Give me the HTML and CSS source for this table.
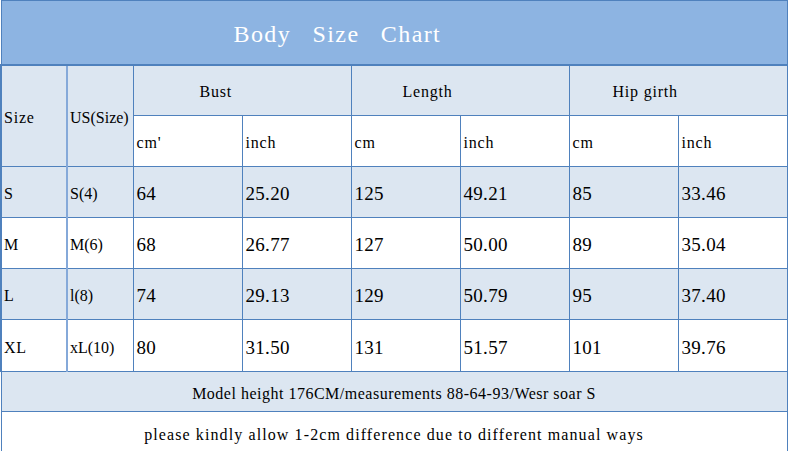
FILE: index.html
```html
<!DOCTYPE html>
<html lang="en">
<head>
<meta charset="utf-8">
<title>Body Size Chart</title>
<link rel="stylesheet" href="styles.css">
</head>
<body>
<table class="chart">
  <colgroup>
    <col class="col-size">
    <col class="col-us">
    <col class="col-val"><col class="col-val">
    <col class="col-val"><col class="col-val">
    <col class="col-val"><col class="col-val">
  </colgroup>
  <tr class="row-title">
    <th colspan="8" class="title"><span>Body</span> <span>Size</span> <span>Chart</span></th>
  </tr>
  <tr class="row-head">
    <th rowspan="2" class="lbl shade first">Size</th>
    <th rowspan="2" class="lbl shade second">US(Size)</th>
    <th colspan="2" class="lbl shade grp grp-bust">Bust</th>
    <th colspan="2" class="lbl shade grp grp-len">Length</th>
    <th colspan="2" class="lbl shade grp grp-hip">Hip girth</th>
  </tr>
  <tr class="row-sub">
    <td class="lbl">cm'</td><td class="lbl">inch</td>
    <td class="lbl">cm</td><td class="lbl">inch</td>
    <td class="lbl">cm</td><td class="lbl">inch</td>
  </tr>
  <tr class="row-data shade">
    <td class="lbl first">S</td><td class="lbl second">S(4)</td>
    <td class="num">64</td><td class="num">25.20</td>
    <td class="num">125</td><td class="num">49.21</td>
    <td class="num">85</td><td class="num">33.46</td>
  </tr>
  <tr class="row-data">
    <td class="lbl first">M</td><td class="lbl second">M(6)</td>
    <td class="num">68</td><td class="num">26.77</td>
    <td class="num">127</td><td class="num">50.00</td>
    <td class="num">89</td><td class="num">35.04</td>
  </tr>
  <tr class="row-data shade">
    <td class="lbl first">L</td><td class="lbl second">l(8)</td>
    <td class="num">74</td><td class="num">29.13</td>
    <td class="num">129</td><td class="num">50.79</td>
    <td class="num">95</td><td class="num">37.40</td>
  </tr>
  <tr class="row-data row-xl">
    <td class="lbl first">XL</td><td class="lbl second">xL(10)</td>
    <td class="num">80</td><td class="num">31.50</td>
    <td class="num">131</td><td class="num">51.57</td>
    <td class="num">101</td><td class="num">39.76</td>
  </tr>
  <tr class="row-note shade">
    <td colspan="8" class="lbl note note-model">Model height 176CM/measurements 88-64-93/Wesr soar S</td>
  </tr>
  <tr class="row-note row-last">
    <td colspan="8" class="lbl note note-allow">please kindly allow 1-2cm difference due to different manual ways</td>
  </tr>
</table>
</body>
</html>
```

FILE: styles.css
```css
html, body {
  margin: 0;
  padding: 0;
  background: #ffffff;
  overflow: hidden;
}

.chart {
  border-collapse: collapse;
  table-layout: fixed;
  width: 786px;
  color: #000000;
}

.col-size { width: 66px; }
.col-us { width: 66px; }
.col-val { width: 109px; }

.chart th,
.chart td {
  border: 1px solid #4f81bd;
  padding: 4px 0 0 3px;
  text-align: left;
  vertical-align: middle;
  font-weight: normal;
  white-space: nowrap;
  overflow: hidden;
}

.row-title { height: 64px; }
.row-head, .row-sub, .row-data { height: 51px; }
.row-xl { height: 52px; }
.row-note { height: 40px; }

.chart .title {
  background: #8db4e2;
  color: #ffffff;
  font-family: "Liberation Serif", "Times New Roman", serif;
  font-size: 24px;
  letter-spacing: 1.4px;
  word-spacing: 14px;
  padding: 5px 0 0 232px;
  border-bottom-width: 2px;
}

.shade,
.shade td { background: #dce6f1; }

.lbl {
  font-family: "Liberation Serif", "Times New Roman", serif;
  font-size: 16px;
  letter-spacing: 0.8px;
}

.num {
  font-family: "Liberation Serif", "Times New Roman", serif;
  font-size: 19px;
  letter-spacing: 0.3px;
}

.chart .first {
  border-left-width: 2px;
  border-right: 2px solid #85a9d9;
  padding-left: 2px;
}

.chart .second {
  padding-left: 2px;
  letter-spacing: 0;
}

.chart .grp-bust { padding-left: 66px; }
.chart .grp-len { padding-left: 51px; }
.chart .grp-hip { padding-left: 43px; }

.chart .note {
  text-align: center;
  padding-left: 0;
}

.chart .note-model { letter-spacing: 0.5px; }
.chart .note-allow {
  letter-spacing: 1.1px;
  padding-top: 7px;
}

.row-last td { border-bottom: none; }
```
